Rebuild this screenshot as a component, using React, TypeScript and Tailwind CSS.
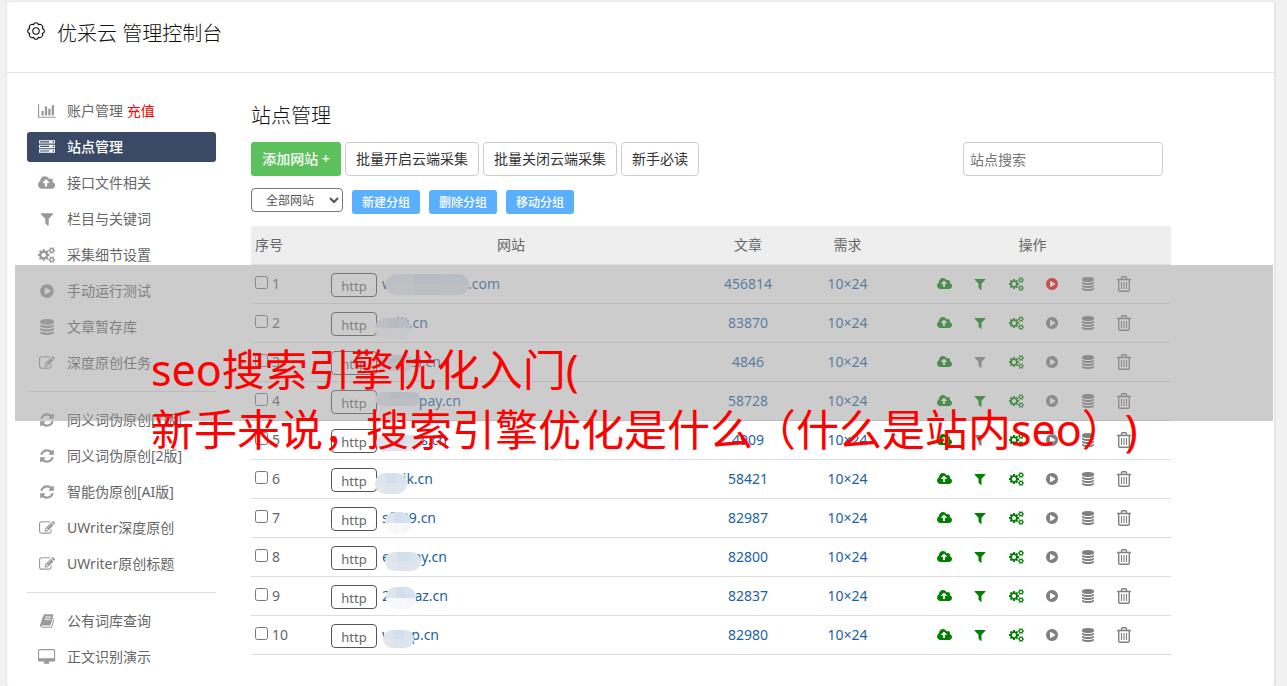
import React, { useMemo, useState } from 'react';

// Type definitions
type IconName =
	| 'chart'
	| 'server'
	| 'upload'
	| 'filter'
	| 'cogs'
	| 'play'
	| 'database'
	| 'edit'
	| 'refresh'
	| 'book'
	| 'desktop';

interface IconProps {
	name: IconName;
	className?: string;
}

interface MenuItem {
	icon: IconName;
	label: string;
	note?: string;
}

interface Mask {
	left: number;
	top: number;
	width: number;
	height: number;
	soft?: boolean;
}

interface Site {
	id: number;
	prefix: string;
	suffix: string;
	width: number;
	articles: number;
	filterOff?: boolean;
	running?: boolean;
	mask: Mask;
}

const ICONS: Record<IconName, { width: number; path: string }> = {
	chart: {
		width: 2048,
		path: 'M640 896v512h-256v-512h256zm384-512v1024h-256v-1024h256zm1024 1152v128h-2048v-1536h128v1408h1920zm-640-896v768h-256v-768h256zm384-384v1152h-256v-1152h256z',
	},
	server: {
		width: 1792,
		path: 'M128 1408h1024v-128h-1024v128zm0-512h1024v-128h-1024v128zm1568 448q0-40-28-68t-68-28-68 28-28 68 28 68 68 28 68-28 28-68zm-1568-960h1024v-128h-1024v128zm1568 448q0-40-28-68t-68-28-68 28-28 68 28 68 68 28 68-28 28-68zm0-512q0-40-28-68t-68-28-68 28-28 68 28 68 68 28 68-28 28-68zm96 832v384h-1792v-384h1792zm0-512v384h-1792v-384h1792zm0-512v384h-1792v-384h1792z',
	},
	upload: {
		width: 1920,
		path: 'M1280 864q0-14-9-23l-352-352q-9-9-23-9t-23 9l-351 351q-10 12-10 24 0 14 9 23t23 9h224v352q0 13 9.5 22.5t22.5 9.5h192q13 0 22.5-9.5t9.5-22.5v-352h224q13 0 22.5-9.5t9.5-22.5zm640 288q0 159-112.5 271.5t-271.5 112.5h-1088q-185 0-316.5-131.5t-131.5-316.5q0-130 70-240t188-165q-2-30-2-43 0-212 150-362t362-150q156 0 285.5 87t188.5 231q71-62 166-62 106 0 181 75t75 181q0 76-41 138 130 31 213.5 135.5t83.5 238.5z',
	},
	filter: {
		width: 1792,
		path: 'M1595 295q17 41-14 70l-493 493v742q0 42-39 59-13 5-25 5-27 0-45-19l-256-256q-19-19-19-45v-486l-493-493q-31-29-14-70 17-39 59-39h1280q42 0 59 39z',
	},
	cogs: {
		width: 1920,
		path: 'M896 896q0-106-75-181t-181-75-181 75-75 181 75 181 181 75 181-75 75-181zm768 512q0-52-38-90t-90-38-90 38-38 90q0 53 37.5 90.5t90.5 37.5 90.5-37.5 37.5-90.5zm0-1024q0-52-38-90t-90-38-90 38-38 90q0 53 37.5 90.5t90.5 37.5 90.5-37.5 37.5-90.5zm-384 421v185q0 10-7 19.5t-16 10.5l-155 24q-11 35-32 76 34 48 90 115 7 11 7 20 0 12-7 19-23 30-82.5 89.5t-78.5 59.5q-11 0-21-7l-115-90q-37 19-77 31-11 108-23 155-7 24-30 24h-186q-11 0-20-7.5t-10-17.5l-23-153q-34-10-75-31l-118 89q-7 7-20 7-11 0-21-8-144-133-144-160 0-9 7-19 10-14 41-53t47-61q-23-44-35-82l-152-24q-10-1-17-9.5t-7-19.5v-185q0-10 7-19.5t16-10.5l155-24q11-35 32-76-34-48-90-115-7-11-7-20 0-12 7-20 22-30 82-89t79-59q11 0 21 7l115 90q34-18 77-32 11-108 23-154 7-24 30-24h186q11 0 20 7.5t10 17.5l23 153q34 10 75 31l118-89q8-7 20-7 11 0 21 8 144 133 144 160 0 8-7 19-12 16-42 54t-45 60q23 48 34 82l152 23q10 2 17 10.5t7 19.5zm640 533v140q0 16-149 31-12 27-30 52 51 113 51 138 0 4-4 7-122 71-124 71-8 0-46-47t-52-68q-20 2-30 2t-30-2q-14 21-52 68t-46 47q-2 0-124-71-4-3-4-7 0-25 51-138-18-25-30-52-149-15-149-31v-140q0-16 149-31 13-29 30-52-51-113-51-138 0-4 4-7 4-2 35-20t59-34 30-16q8 0 46 46.5t52 67.5q20-2 30-2t30 2q51-71 92-112l6-2q4 0 124 70 4 3 4 7 0 25-51 138 17 23 30 52 149 15 149 31zm0-1024v140q0 16-149 31-12 27-30 52 51 113 51 138 0 4-4 7-122 71-124 71-8 0-46-47t-52-68q-20 2-30 2t-30-2q-14 21-52 68t-46 47q-2 0-124-71-4-3-4-7 0-25 51-138-18-25-30-52-149-15-149-31v-140q0-16 149-31 13-29 30-52-51-113-51-138 0-4 4-7 4-2 35-20t59-34 30-16q8 0 46 46.5t52 67.5q20-2 30-2t30 2q51-71 92-112l6-2q4 0 124 70 4 3 4 7 0 25-51 138 17 23 30 52 149 15 149 31z',
	},
	play: {
		width: 1792,
		path: 'M896 128q209 0 385.5 103t279.5 279.5 103 385.5-103 385.5-279.5 279.5-385.5 103-385.5-103-279.5-279.5-103-385.5 103-385.5 279.5-279.5 385.5-103zm384 823q32-18 32-55t-32-55l-544-320q-31-19-64-1-32 19-32 56v640q0 37 32 56 16 8 32 8 17 0 32-9z',
	},
	database: {
		width: 1792,
		path: 'M896 768q237 0 443-43t325-127v170q0 69-103 128t-280 93.5-385 34.5-385-34.5-280-93.5-103-128v-170q119 84 325 127t443 43zm0 768q237 0 443-43t325-127v170q0 69-103 128t-280 93.5-385 34.5-385-34.5-280-93.5-103-128v-170q119 84 325 127t443 43zm0-384q237 0 443-43t325-127v170q0 69-103 128t-280 93.5-385 34.5-385-34.5-280-93.5-103-128v-170q119 84 325 127t443 43zm0-1152q208 0 385 34.5t280 93.5 103 128v128q0 69-103 128t-280 93.5-385 34.5-385-34.5-280-93.5-103-128v-128q0-69 103-128t280-93.5 385-34.5z',
	},
	edit: {
		width: 1792,
		path: 'M888 1184l116-116-152-152-116 116v56h96v96h56zm440-720q-16-16-33 1l-350 350q-17 17-1 33t33-1l350-350q17-17 1-33zm80 594v190q0 119-84.5 203.5t-203.5 84.5h-832q-119 0-203.5-84.5t-84.5-203.5v-832q0-119 84.5-203.5t203.5-84.5h832q63 0 117 25 15 7 18 23 3 17-9 29l-49 49q-14 14-32 8-23-6-45-6h-832q-66 0-113 47t-47 113v832q0 66 47 113t113 47h832q66 0 113-47t47-113v-126q0-13 9-22l64-64q15-15 35-7t20 29zm-96-738l288 288-672 672h-288v-288zm444 132l-92 92-288-288 92-92q28-28 68-28t68 28l152 152q28 28 28 68t-28 68z',
	},
	refresh: {
		width: 1792,
		path: 'M1639 1056q0 5-1 7-64 268-268 434.5t-478 166.5q-146 0-282.5-55t-243.5-157l-129 129q-19 19-45 19t-45-19-19-45v-448q0-26 19-45t45-19h448q26 0 45 19t19 45-19 45l-137 137q71 66 161 102t187 36q134 0 250-65t186-179q11-17 53-117 8-23 30-23h192q13 0 22.5 9.5t9.5 22.5zm25-800v448q0 26-19 45t-45 19h-448q-26 0-45-19t-19-45 19-45l138-138q-148-137-349-137-134 0-250 65t-186 179q-11 17-53 117-8 23-30 23h-199q-13 0-22.5-9.5t-9.5-22.5v-7q65-268 270-434.5t480-166.5q146 0 284 55.5t245 156.5l130-129q19-19 45-19t45 19 19 45z',
	},
	book: {
		width: 1664,
		path: 'M1639 478q40 57 18 129l-275 906q-19 64-76.5 107.5t-122.5 43.5h-923q-77 0-148.5-53.5t-99.5-131.5q-24-67-2-127 0-4 3-27t4-37q1-8-3-21.5t-3-19.5q2-11 8-21t16.5-23.5 16.5-23.5q23-38 45-91.5t30-91.5q3-10 .5-30t-.5-28q3-11 17-28t17-23q21-36 42-92t25-90q1-9-2.5-32t.5-28q4-13 22-30.5t22-22.5q19-26 42.5-84.5t27.5-96.5q1-8-3-25.5t-2-26.5q2-8 9-18t18-23 17-21q8-12 16.5-30.5t15-35 16-36 19.5-32 26.5-23.5 36-11.5 47.5 5.5l-1 3q38-9 51-9h761q74 0 114 56t18 130l-274 906q-36 119-71.5 153.5t-128.5 34.5h-869q-27 0-38 15-11 16-1 43 24 70 144 70h923q29 0 56-15.5t35-41.5l300-987q7-22 5-57 38 15 59 43zm-1064 2q-4 13 2 22.5t20 9.5h608q13 0 25.5-9.5t16.5-22.5l21-64q4-13-2-22.5t-20-9.5h-608q-13 0-25.5 9.5t-16.5 22.5zm-83 256q-4 13 2 22.5t20 9.5h608q13 0 25.5-9.5t16.5-22.5l21-64q4-13-2-22.5t-20-9.5h-608q-13 0-25.5 9.5t-16.5 22.5z',
	},
	desktop: {
		width: 1920,
		path: 'M1792 992v-832q0-13-9.5-22.5t-22.5-9.5h-1600q-13 0-22.5 9.5t-9.5 22.5v832q0 13 9.5 22.5t22.5 9.5h1600q13 0 22.5-9.5t9.5-22.5zm128-832v1088q0 66-47 113t-113 47h-544q0 37 16 77.5t32 71 16 43.5q0 26-19 45t-45 19h-512q-26 0-45-19t-19-45q0-14 16-44t32-70 16-78h-544q-66 0-113-47t-47-113v-1088q0-66 47-113t113-47h1600q66 0 113 47t47 113z',
	},
};

const MENU_GROUPS: MenuItem[][] = [
	[
		{ icon: 'chart', label: '账户管理', note: '充值' },
		{ icon: 'server', label: '站点管理' },
		{ icon: 'upload', label: '接口文件相关' },
		{ icon: 'filter', label: '栏目与关键词' },
		{ icon: 'cogs', label: '采集细节设置' },
		{ icon: 'play', label: '手动运行测试' },
		{ icon: 'database', label: '文章暂存库' },
		{ icon: 'edit', label: '深度原创任务' },
	],
	[
		{ icon: 'refresh', label: '同义词伪原创[1版]' },
		{ icon: 'refresh', label: '同义词伪原创[2版]' },
		{ icon: 'refresh', label: '智能伪原创[AI版]' },
		{ icon: 'edit', label: 'UWriter深度原创' },
		{ icon: 'edit', label: 'UWriter原创标题' },
	],
	[
		{ icon: 'book', label: '公有词库查询' },
		{ icon: 'desktop', label: '正文识别演示' },
	],
];

const SITES: Site[] = [
	{ id: 1, prefix: 'w', suffix: '.com', width: 118, articles: 456814, running: true, mask: { left: 4, top: 9, width: 83, height: 21 } },
	{ id: 2, prefix: '', suffix: 'iit.cn', width: 46, articles: 83870, mask: { left: -7, top: 14, width: 36, height: 20, soft: true } },
	{ id: 3, prefix: '', suffix: 'si.cn', width: 59, articles: 4846, filterOff: true, mask: { left: -5, top: 12, width: 36, height: 16 } },
	{ id: 4, prefix: '', suffix: 'pay.cn', width: 79, articles: 58728, mask: { left: -7, top: 10, width: 45, height: 14 } },
	{ id: 5, prefix: '', suffix: 's.cn', width: 65, articles: 4909, filterOff: true, mask: { left: -6, top: 14, width: 46, height: 16 } },
	{ id: 6, prefix: '', suffix: 'ik.cn', width: 51, articles: 58421, mask: { left: -7, top: 13, width: 32, height: 21 } },
	{ id: 7, prefix: 'sf', suffix: '39.cn', width: 54, articles: 82987, mask: { left: 3, top: 13, width: 26, height: 22, soft: true } },
	{ id: 8, prefix: 'e', suffix: 'ay.cn', width: 65, articles: 82800, mask: { left: 3, top: 14, width: 36, height: 19 } },
	{ id: 9, prefix: '2', suffix: 'az.cn', width: 66, articles: 82837, mask: { left: 4, top: 10, width: 30, height: 22, soft: true } },
	{ id: 10, prefix: 'w', suffix: 'p.cn', width: 57, articles: 82980, mask: { left: 1, top: 14, width: 31, height: 18 } },
];

const Icon: React.FC<IconProps> = ({ name, className = '' }) => {
	const { width, path } = ICONS[name];
	return (
		<svg
			viewBox={`0 0 ${width} 1792`}
			className={`w-auto shrink-0 ${className}`}
			fill="currentColor"
			aria-hidden="true"
		>
			<path d={path} />
		</svg>
	);
};

const GearIcon: React.FC = () => (
	<svg viewBox="0 0 18 18" className="h-[18px] w-[18px]" fill="none" stroke="currentColor" strokeWidth="1.1" aria-hidden="true">
		<path d="M7.4 1.2Q9 .2 10.6 1.2L11.4 2.6 13.1 2.2Q15 2.8 15.8 4.9L15.4 6.6 16.8 7.4Q17.8 9 16.8 10.6L15.4 11.4 15.8 13.1Q15.2 15 13.1 15.8L11.4 15.4 10.6 16.8Q9 17.8 7.4 16.8L6.6 15.4 4.9 15.8Q2.8 15.2 2.2 13.1L2.6 11.4 1.2 10.6Q.2 9 1.2 7.4L2.6 6.6 2.2 4.9Q2.8 2.8 4.9 2.2L6.6 2.6Z" />
		<circle cx="9" cy="9" r="3.2" />
	</svg>
);

const TrashIcon: React.FC = () => (
	<svg viewBox="0 0 14 16" className="h-4 w-[14px]" fill="none" stroke="currentColor" strokeWidth="1.4" aria-hidden="true">
		<path d="M0 3.5h14M4.5 3.5v-1.5q0-1.2 1.2-1.2h2.6q1.2 0 1.2 1.2v1.5M1.7 3.5v10.5q0 1.2 1.2 1.2h8.2q1.2 0 1.2-1.2v-10.5" />
		<path d="M4.5 6v7M7 6v7M9.5 6v7" strokeWidth="1.1" />
	</svg>
);

// pixelated patch over the middle of a domain name
const DomainMask: React.FC<{ mask: Mask }> = ({ mask }) => (
	<span
		className="absolute flex flex-col overflow-hidden rounded-[10px]"
		style={{
			left: mask.left,
			top: mask.top,
			width: mask.width,
			height: mask.height,
		}}
	>
		<span className="flex flex-1">
			<span className="flex-1 bg-[#dfe5ec]" />
			<span className="flex-1 bg-[#d3dfeb]" />
			<span className="flex-1 bg-[#d9e3ee]" />
		</span>
		<span className="flex flex-1">
			<span className={`flex-1 ${mask.soft ? 'bg-[#fafafa]' : 'bg-[#e3e7ed]'}`} />
			<span className={`flex-1 ${mask.soft ? 'bg-[#f7f8fa]' : 'bg-[#dce4ee]'}`} />
			<span className={`flex-1 ${mask.soft ? 'bg-[#f4f6f9]' : 'bg-[#dfe6ef]'}`} />
		</span>
	</span>
);

const Sidebar: React.FC = () => {
	const [active, setActive] = useState<string>('站点管理');

	return (
		<nav className="flex w-[189px] shrink-0 flex-col gap-1.5">
			{MENU_GROUPS.map((group, index) => (
				<React.Fragment key={index}>
					{index > 0 && <hr className="my-[7px] border-[#ddd]" />}
					{group.map((item) => {
						const isActive = item.label === active;
						return (
							<a
								key={item.label}
								href="#"
								onClick={() => setActive(item.label)}
								className={`flex h-[30px] items-center gap-2.5 rounded-[3px] pl-2.5 text-sm ${isActive ? 'bg-[#3a4a66] font-medium text-white' : 'text-[#666]'}`}
							>
								<span className={`flex w-5 justify-center ${isActive ? 'text-white' : 'text-[#999]'}`}>
									<Icon name={item.icon} className="h-4" />
								</span>
								<span>
									{item.label}
									{item.note && <span className="text-[#f00]"> {item.note}</span>}
								</span>
							</a>
						);
					})}
				</React.Fragment>
			))}
		</nav>
	);
};

const SiteRow: React.FC<{ site: Site }> = ({ site }) => (
	<tr className="h-[39px] border-b border-[#ddd]">
		<td className="pl-1">
			<label className="flex items-center gap-1">
				<input type="checkbox" className="mb-0.5 h-[13px] w-[13px]" />
				{site.id}
			</label>
		</td>
		<td className="pl-1">
			<div className="flex h-[38px] items-center gap-[5px]">
				<button type="button" className="mt-0.5 h-6 w-[46px] rounded border border-[#555] pt-0.5 text-[13px] leading-5">
					http
				</button>
				<a href="#" className="relative flex h-[38px] items-center text-[#1b5fa6]">
					<span className="flex justify-between" style={{ width: site.width }}>
						<span>{site.prefix}</span>
						<span>{site.suffix}</span>
					</span>
					<DomainMask mask={site.mask} />
				</a>
			</div>
		</td>
		<td className="text-center text-[#1b5fa6]">{site.articles}</td>
		<td className="text-center text-[#1b5fa6]">10×24</td>
		<td>
			<div className="flex items-center justify-center pl-[3px]">
				<button type="button" aria-label="接口文件" className="flex w-9 justify-center text-[#008000]">
					<Icon name="upload" className="h-3.5" />
				</button>
				<button type="button" aria-label="关键词" className={`flex w-9 justify-center ${site.filterOff ? 'text-[#808080]' : 'text-[#008000]'}`}>
					<Icon name="filter" className="h-3.5" />
				</button>
				<button type="button" aria-label="采集设置" className="flex w-9 justify-center text-[#008000]">
					<Icon name="cogs" className="h-3.5" />
				</button>
				<button type="button" aria-label="运行" className={`flex w-9 justify-center ${site.running ? 'text-[#f00]' : 'text-[#808080]'}`}>
					<Icon name="play" className="h-3.5" />
				</button>
				<button type="button" aria-label="暂存库" className="flex w-9 justify-center text-[#808080]">
					<Icon name="database" className="h-3.5" />
				</button>
				<button type="button" aria-label="删除" className="flex w-9 justify-center text-[#808080]">
					<TrashIcon />
				</button>
			</div>
		</td>
	</tr>
);

const SiteManager: React.FC = () => {
	const [search, setSearch] = useState<string>('');

	const sites = useMemo(
		() => SITES.filter((site) => `${site.prefix}${site.suffix}`.includes(search)),
		[search]
	);

	return (
		<main className="max-w-[920px] flex-1">
			<h2 className="mt-1 text-xl leading-8 font-light text-[#111]">站点管理</h2>

			<div className="mt-2.5 flex items-center gap-1 pr-2">
				<button type="button" className="h-[34px] w-[90px] rounded-[3px] bg-[#5cc05c] text-sm font-medium text-white">
					添加网站 +
				</button>
				{['批量开启云端采集', '批量关闭云端采集', '新手必读'].map((label) => (
					<button key={label} type="button" className="h-[34px] rounded border border-[#ccc] px-2.5 text-sm text-[#333]">
						{label}
					</button>
				))}
				<input
					type="text"
					aria-label="站点搜索"
					placeholder="站点搜索"
					value={search}
					onChange={(e) => setSearch(e.target.value)}
					className="ml-auto h-[34px] w-[200px] rounded border border-[#ccc] px-1.5 text-sm placeholder:text-[#757575]"
				/>
			</div>

			<div className="mt-3 flex gap-[9px]">
				<select aria-label="网站分组" className="h-6 w-[92px] rounded border border-[#767676] pl-2.5 text-xs text-[#555]">
					<option>全部网站</option>
				</select>
				{['新建分组', '删除分组', '移动分组'].map((label) => (
					<button key={label} type="button" className="mt-0.5 h-6 w-[68px] rounded-[3px] bg-[#5aafff] pt-0.5 text-xs font-medium text-white">
						{label}
					</button>
				))}
			</div>

			<table className="mt-3 w-full table-fixed border-collapse text-sm">
				<colgroup>
					<col className="w-[76px]" />
					<col className="w-[368px]" />
					<col className="w-[106px]" />
					<col className="w-[93px]" />
					<col />
				</colgroup>
				<thead>
					<tr className="h-[38px] border-b border-[#ddd] bg-[#eee]">
						<th className="pl-1 text-left font-normal">序号</th>
						<th className="font-normal">网站</th>
						<th className="font-normal">文章</th>
						<th className="font-normal">需求</th>
						<th className="font-normal">操作</th>
					</tr>
				</thead>
				<tbody>
					{sites.map((site) => (
						<SiteRow key={site.id} site={site} />
					))}
				</tbody>
			</table>
		</main>
	);
};

const App: React.FC = () => {
	return (
		<div className="relative h-screen overflow-hidden bg-[#f1f1f1] pt-px pr-[11px] pl-1.5 font-['Noto_Sans','Noto_Sans_CJK_SC',sans-serif] text-[#666]">
			<div className="min-h-screen rounded border border-r-2 border-[#e5e5e5] bg-white">
				<header className="flex h-[71px] items-start gap-3 border-b border-[#e5e5e5] px-5 pt-4 text-[#111]">
					<span className="pt-1">
						<GearIcon />
					</span>
					<h1 className="text-xl leading-8 font-light">优采云 管理控制台</h1>
				</header>
				<div className="flex gap-[35px] px-5 pt-[23px]">
					<Sidebar />
					<SiteManager />
				</div>
			</div>

			{/* Headline banner */}
			<div className="pointer-events-none absolute top-[265px] right-3.5 left-[15px] h-[156px] bg-[#999]/50 pt-[75px] pl-[136px]">
				<p className="text-[43px] leading-[60px] whitespace-nowrap text-[#f00] [text-spacing-trim:space-all]">
					seo搜索引擎优化入门(
					<br />
					新手来说，搜索引擎优化是什么（什么是站内seo）)
				</p>
			</div>
		</div>
	);
};

export default App;
